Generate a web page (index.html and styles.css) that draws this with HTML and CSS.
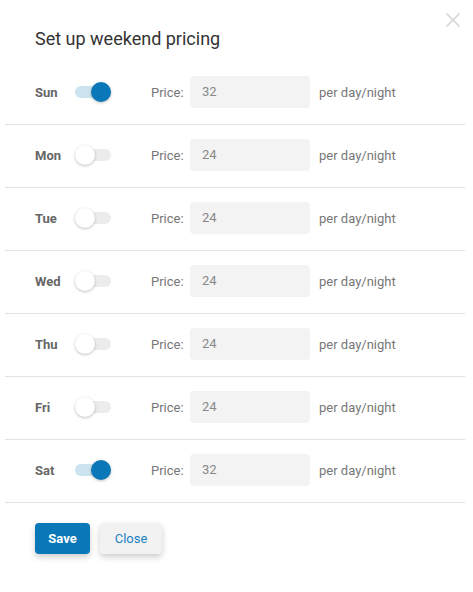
FILE: index.html
```html
<!DOCTYPE html>
<html>
<head>
<meta charset="utf-8">
<link rel="stylesheet" href="styles.css">
</head>
<body>
<div class="dialog">
  <button class="close-x" aria-label="Close">
    <svg width="16" height="16" viewBox="0 0 16 16"><path d="M1.5 1.5 L14.5 14.5 M14.5 1.5 L1.5 14.5" stroke="#d4d4d4" stroke-width="1.6" fill="none"/></svg>
  </button>
  <h1 class="title">Set up weekend pricing</h1>
  <div class="rows">
    <div class="row"><span class="day">Sun</span><span class="toggle on"><span class="knob"></span></span><span class="label">Price:</span><span class="input">32</span><span class="unit">per day/night</span></div>
    <div class="row"><span class="day">Mon</span><span class="toggle"><span class="knob"></span></span><span class="label">Price:</span><span class="input">24</span><span class="unit">per day/night</span></div>
    <div class="row"><span class="day">Tue</span><span class="toggle"><span class="knob"></span></span><span class="label">Price:</span><span class="input">24</span><span class="unit">per day/night</span></div>
    <div class="row"><span class="day">Wed</span><span class="toggle"><span class="knob"></span></span><span class="label">Price:</span><span class="input">24</span><span class="unit">per day/night</span></div>
    <div class="row"><span class="day">Thu</span><span class="toggle"><span class="knob"></span></span><span class="label">Price:</span><span class="input">24</span><span class="unit">per day/night</span></div>
    <div class="row"><span class="day">Fri</span><span class="toggle"><span class="knob"></span></span><span class="label">Price:</span><span class="input">24</span><span class="unit">per day/night</span></div>
    <div class="row"><span class="day">Sat</span><span class="toggle on"><span class="knob"></span></span><span class="label">Price:</span><span class="input">32</span><span class="unit">per day/night</span></div>
  </div>
  <div class="actions">
    <button class="btn primary">Save</button>
    <button class="btn secondary">Close</button>
  </div>
</div>
</body>
</html>
```

FILE: styles.css
```css
* { box-sizing: border-box; }
html, body { margin: 0; padding: 0; background: #fff; }
body { font-family: Roboto, "Noto Sans", "Liberation Sans", sans-serif; }

.dialog {
  position: relative;
  width: 473px;
  height: 592px;
  padding-top: 27px;
}

.close-x {
  position: absolute;
  top: 12px;
  left: 445px;
  width: 16px;
  height: 16px;
  padding: 0;
  border: 0;
  background: none;
  line-height: 0;
}

.title {
  margin: 0 0 11px 35px;
  font-size: 18px;
  line-height: 24px;
  font-weight: 400;
  color: #333;
}

.rows { margin: 0 8px 0 5px; }

.row {
  display: flex;
  align-items: center;
  height: 63px;
  padding-left: 30px;
  padding-bottom: 2px;
  border-bottom: 1px solid #e2e2e2;
  font-size: 13px;
}

.day {
  width: 40px;
  font-weight: 700;
  color: #666;
}

.toggle {
  position: relative;
  width: 36px;
  height: 12px;
  border-radius: 6px;
  background: #ececec;
  margin-right: 40px;
}
.toggle .knob {
  position: absolute;
  top: -4px;
  left: 0;
  width: 20px;
  height: 20px;
  border-radius: 50%;
  background: #fff;
  box-shadow: 0 1px 3px rgba(0,0,0,0.25);
}
.toggle.on { background: #cce3f0; }
.toggle.on .knob {
  left: 16px;
  background: #0a78b8;
}

.label {
  width: 39px;
  color: #777;
}

.input {
  width: 120px;
  height: 32px;
  line-height: 32px;
  padding-left: 12px;
  border-radius: 4px;
  background: #f3f3f3;
  color: #888;
  margin-right: 9px;
}

.unit { color: #777; }

.actions {
  display: flex;
  gap: 10px;
  padding: 20px 0 0 35px;
}

.btn {
  height: 31px;
  border: 0;
  border-radius: 4px;
  font-family: inherit;
  font-size: 13px;
  padding: 0 13px;
  box-shadow: 0 3px 6px rgba(0,0,0,0.2);
}
.btn.primary {
  width: 55px;
  background: #0a78b8;
  color: #fff;
  font-weight: 700;
}
.btn.secondary {
  width: 62px;
  background: #f2f2f2;
  color: #1a82c4;
}
```
